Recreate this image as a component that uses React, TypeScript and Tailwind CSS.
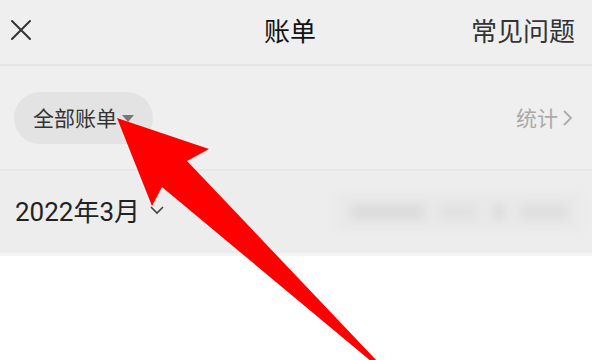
import React from "react";

export default function App() {
  const font = { fontFamily: '"Noto Sans CJK SC", "Noto Sans", sans-serif' };
  return (
    <div className="relative w-[592px] h-[360px] overflow-hidden bg-white" style={font}>
      {/* top bar */}
      <div className="h-[64px] bg-[#efefef] flex items-center justify-between px-[10px] relative">
        <svg width="22" height="22" viewBox="0 0 22 22" className="-mt-[4px]">
          <path d="M2 2 L20 20 M20 2 L2 20" stroke="#333" strokeWidth="2" strokeLinecap="round" />
        </svg>
        <div className="absolute left-[264px] top-[17px] text-[26px] text-[#111] leading-none">账单</div>
        <div className="text-[26px] text-[#333] leading-none pr-[7px] -mt-[4px]">常见问题</div>
      </div>
      <div className="h-[2px] bg-[#e6e6e6]" />
      {/* filter row */}
      <div className="h-[103px] bg-[#efefef] flex items-center justify-between pl-[14px] pr-[18px]">
        <div className="h-[52px] w-[139px] rounded-full bg-[#e3e3e3] flex items-center pl-[19px]">
          <span className="text-[21px] text-[#333] leading-none">全部账单</span>
          <svg width="14" height="8" viewBox="0 0 14 8" className="ml-[4px] mt-[2px]">
            <path d="M1 0 L13 0 L7 7 Z" fill="#777" />
          </svg>
        </div>
        <div className="flex items-center text-[21px] text-[#aaa] leading-none">
          <span>统计</span>
          <svg width="12" height="18" viewBox="0 0 12 18" className="ml-[4px]">
            <path d="M2 2 L9 9 L2 16" stroke="#aaa" strokeWidth="1.8" fill="none" />
          </svg>
        </div>
      </div>
      <div className="h-[2px] bg-[#e6e6e6]" />
      {/* date row */}
      <div className="h-[82px] bg-[#ededed] flex items-center justify-between pl-[15px] pr-[9px]">
        <div className="flex items-center">
          <span className="text-[26px] text-[#222] leading-none" style={{ fontFamily: 'Roboto, "Noto Sans CJK SC", sans-serif' }}>2022年3月</span>
          <svg width="14" height="10" viewBox="0 0 14 10" className="ml-[10px] mt-[-4px]">
            <path d="M1 2 L7 8 L13 2" stroke="#444" strokeWidth="1.6" fill="none" />
          </svg>
        </div>
        <div className="w-[248px] h-[40px] bg-[#e9e9e9] flex items-center gap-[16px] px-[16px] blur-[4px]">
          <div className="h-[16px] w-[80px] bg-[#dcdcdc]" />
          <div className="h-[16px] w-[40px] bg-[#e2e2e2]" />
          <div className="h-[16px] w-[14px] bg-[#dcdcdc] rounded-full" />
          <div className="h-[16px] w-[50px] bg-[#dfdfdf]" />
        </div>
      </div>
      <div className="h-[3px] bg-[#f4f4f4]" />
      {/* red arrow overlay */}
      <svg className="absolute left-0 top-0 pointer-events-none" width="592" height="360" viewBox="0 0 592 360">
        <path d="M117 118 L209 149 L187 161 L378 362 L372 362 L162 187 L152 206 Z" fill="#ff0000" />
      </svg>
    </div>
  );
}
